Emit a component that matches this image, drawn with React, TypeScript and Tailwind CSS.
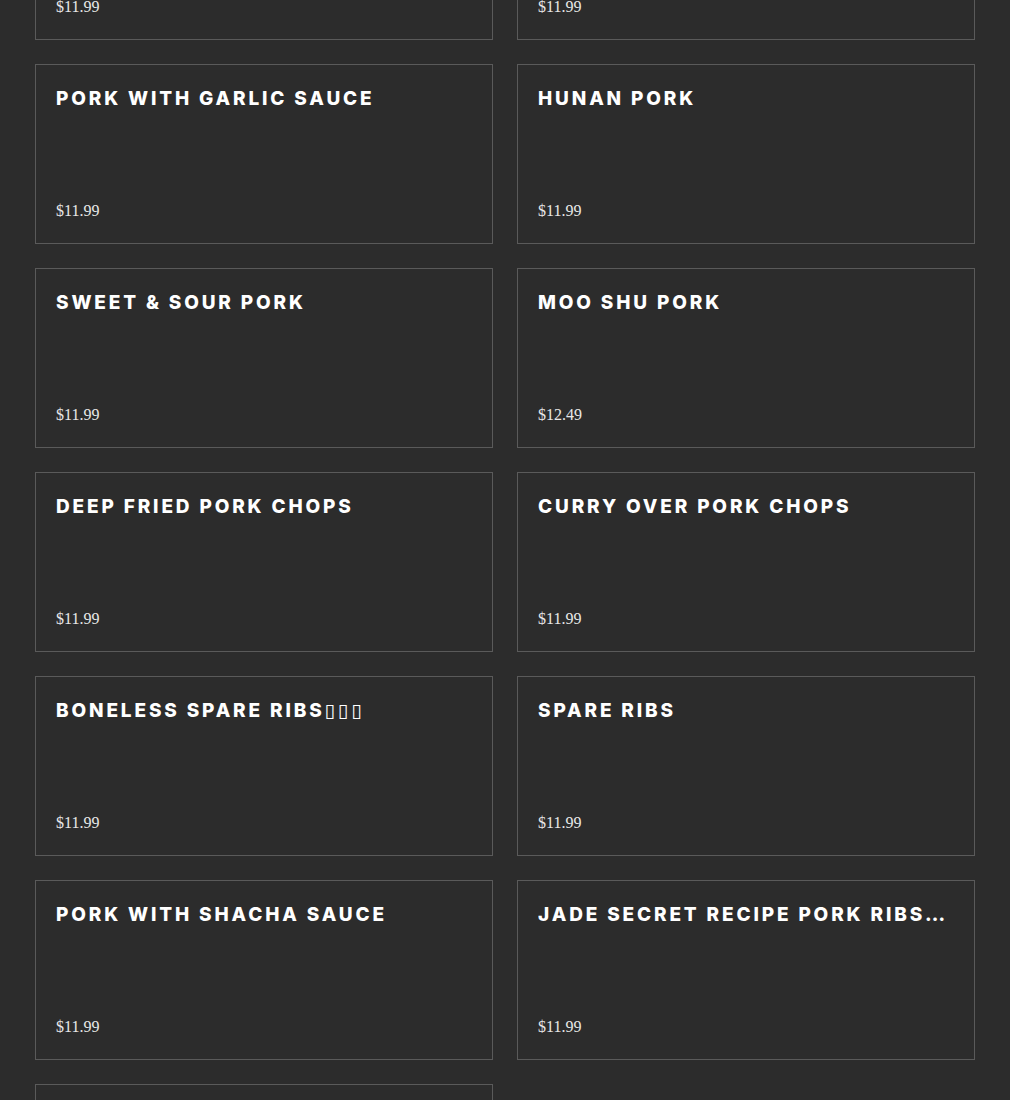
import React from "react";

const items: { name: string; price: string }[] = [
  { name: "Roast Pork with Broccoli", price: "$11.99" },
  { name: "Roast Pork with Mixed Vegetables", price: "$11.99" },
  { name: "Pork with Garlic Sauce", price: "$11.99" },
  { name: "Hunan Pork", price: "$11.99" },
  { name: "Sweet & Sour Pork", price: "$11.99" },
  { name: "Moo Shu Pork", price: "$12.49" },
  { name: "Deep Fried Pork Chops", price: "$11.99" },
  { name: "Curry over Pork Chops", price: "$11.99" },
  { name: "Boneless Spare Ribs\u25AF\u25AF\u25AF", price: "$11.99" },
  { name: "Spare Ribs", price: "$11.99" },
  { name: "Pork with Shacha Sauce", price: "$11.99" },
  { name: "Jade Secret Recipe Pork Ribs\u25AF\u25AF\u25AF\u25AF\u25AF", price: "$11.99" },
  { name: "Salt & Pepper Pork Chops", price: "$11.99" },
];

export default function App() {
  return (
    <div className="h-[1100px] bg-[#2c2c2c] overflow-hidden">
      <div className="mt-[-140px] px-[35px] grid grid-cols-2 gap-x-[24px] gap-y-[24px]">
        {items.map((it, i) => (
          <div
            key={i}
            className="h-[180px] border border-[#5a5a5a] bg-[#2c2c2c] px-[20px] pt-[20px] pb-[22px] flex flex-col justify-between"
          >
            <div
              className="text-white font-extrabold uppercase whitespace-nowrap overflow-hidden text-ellipsis text-[19px] leading-[28px] tracking-[0.15em]"
              style={{ fontFamily: "Inter, 'DejaVu Sans', sans-serif" }}
            >
              {it.name}
            </div>
            <div
              className="text-[#e8e8e8] text-[16px] leading-[20px]"
              style={{ fontFamily: "'Liberation Serif', serif" }}
            >
              {it.price}
            </div>
          </div>
        ))}
      </div>
    </div>
  );
}
